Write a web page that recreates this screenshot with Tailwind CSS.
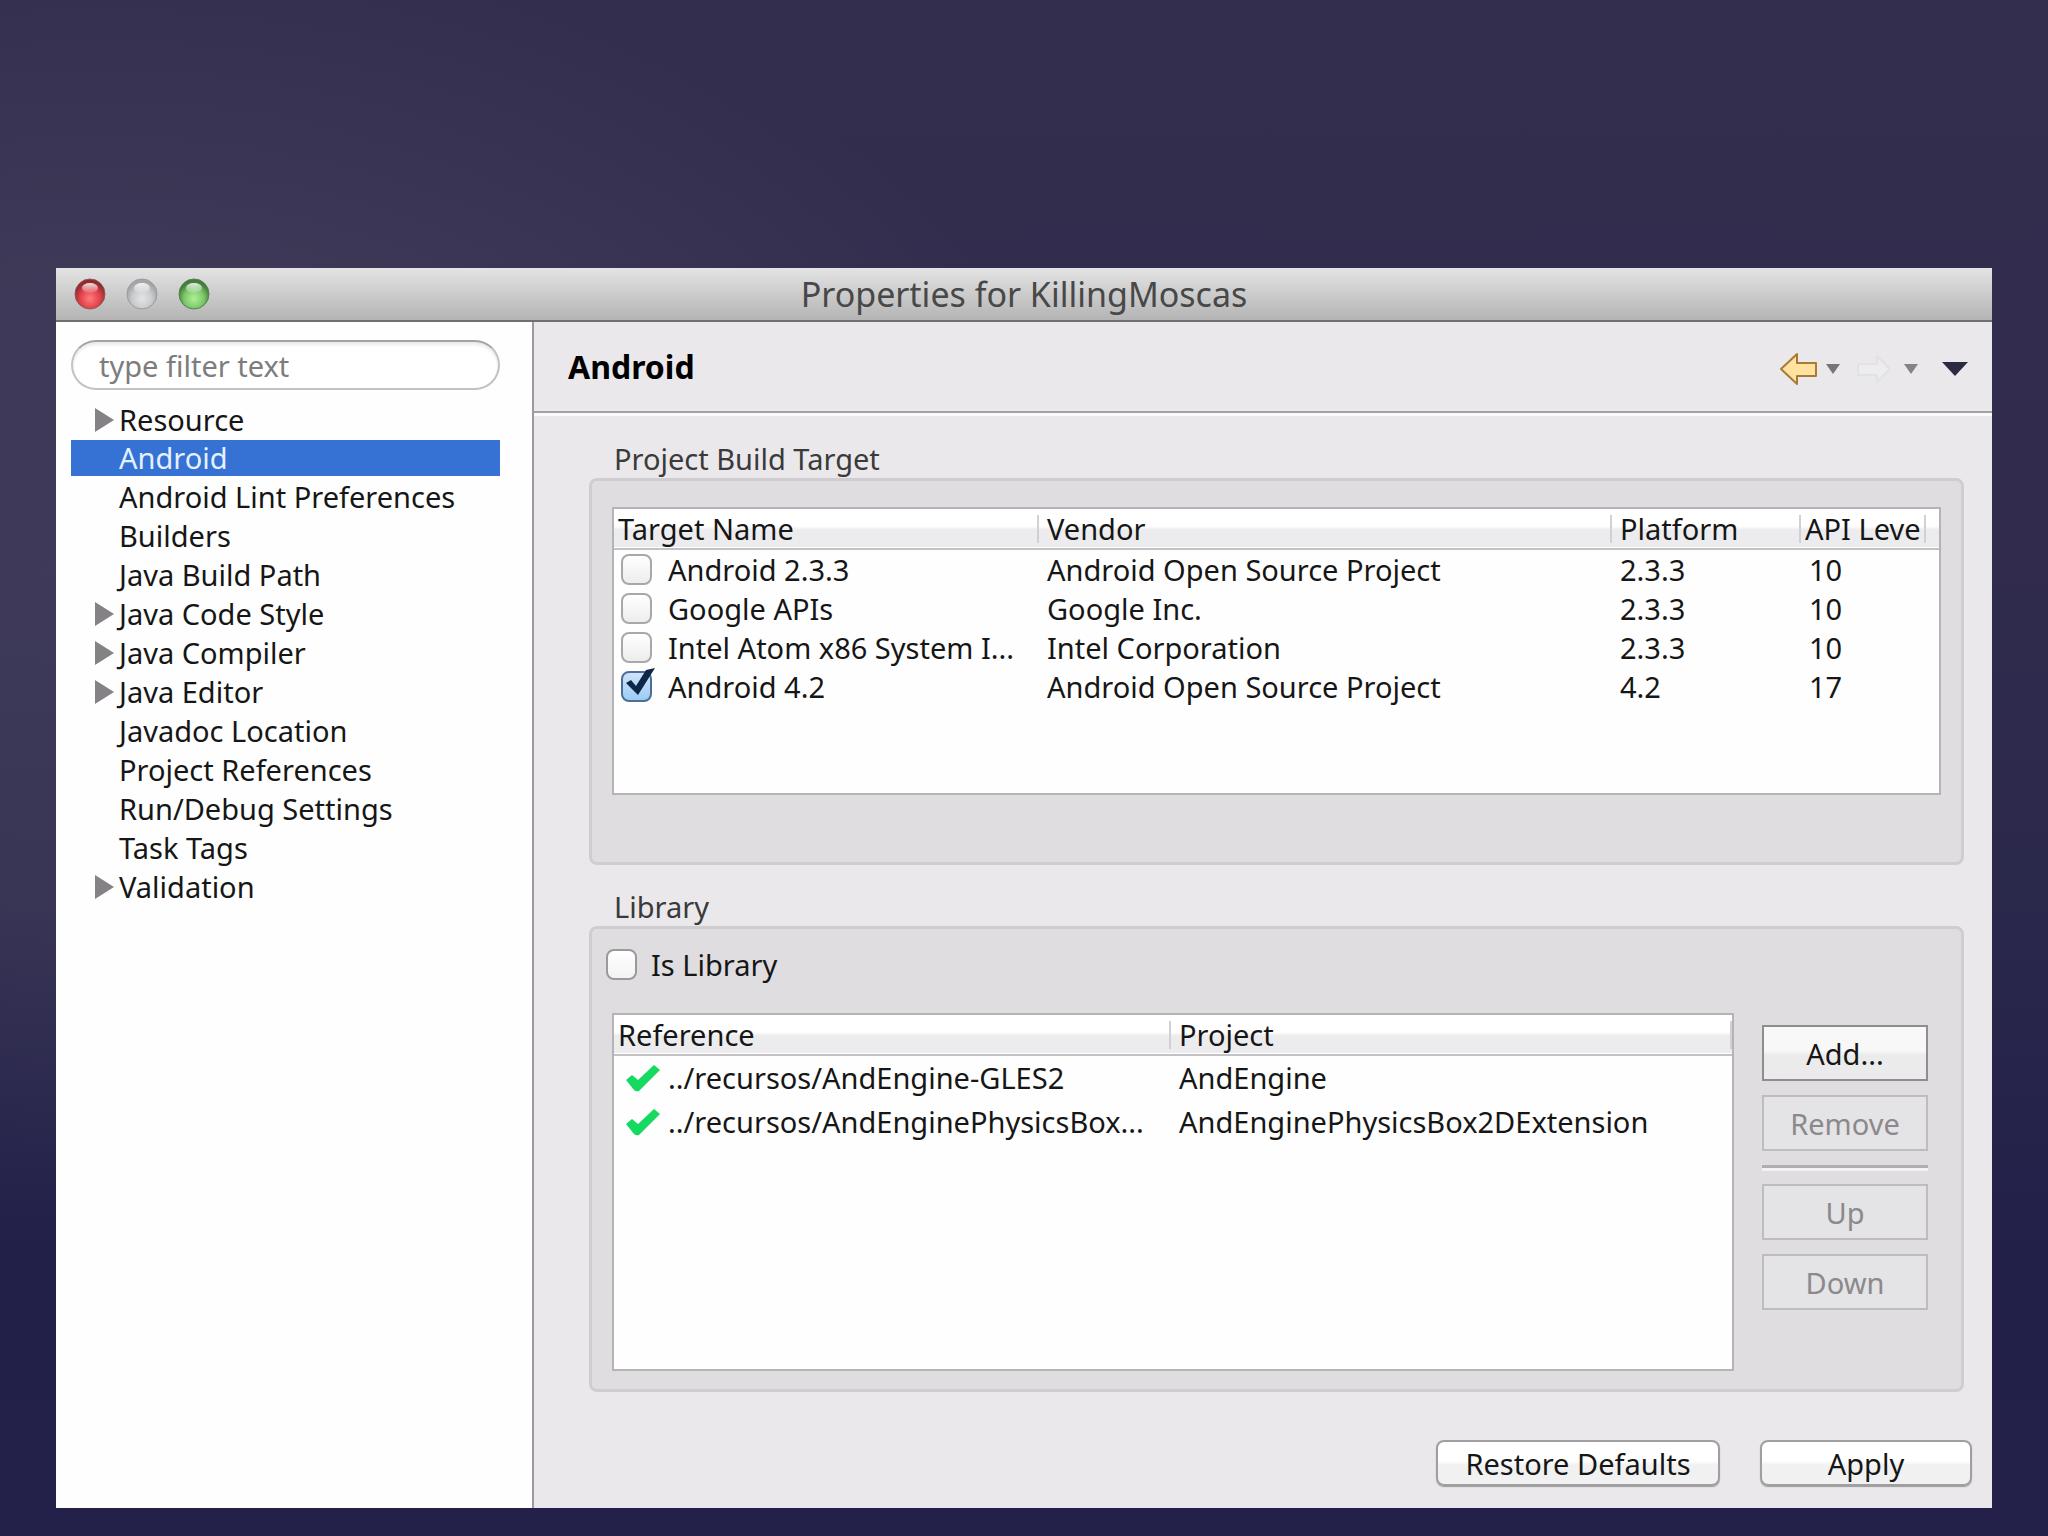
<!DOCTYPE html>
<html lang="en">
<head>
    <meta charset="UTF-8">
    <meta name="viewport" content="width=device-width, initial-scale=1.0">
    <title>Properties for KillingMoscas</title>
    <script src="https://cdn.jsdelivr.net/npm/@tailwindcss/browser@4"></script>
</head>
<body class="min-h-screen flex flex-col px-14 pt-[268px] pb-7 bg-[radial-gradient(ellipse_50%_42%_at_5%_38%,rgba(92,87,111,0.32),rgba(92,87,111,0.28)_50%,transparent),linear-gradient(to_bottom,#332e4d_0%,#312c4e_35%,#2a284b_58%,#222049_82%,#23214a_100%)] font-['Noto_Sans','Open_Sans',sans-serif] text-[29px] leading-[39px] text-[#161616]">
    <div class="flex-1 flex flex-col bg-[#eae8eb]">

        <!-- Title bar -->
        <header class="relative h-[54px] flex items-center justify-center bg-linear-to-b from-[#e4e4e4] to-[#b4b4b5] border-b-2 border-[#6f6f70]">
            <div class="absolute left-[18px] flex gap-5">
                <button aria-label="Close" class="size-8">
                    <svg viewBox="0 0 32 32">
                        <defs>
                            <radialGradient id="red" cx=".5" cy=".65" r=".55"><stop offset="0" stop-color="#ff7b7d"/><stop offset=".6" stop-color="#e2434a"/><stop offset="1" stop-color="#8e2a2e"/></radialGradient>
                            <linearGradient id="shine" x1="0" y1="0" x2="0" y2="1"><stop offset="0" stop-color="#fff" stop-opacity=".85"/><stop offset="1" stop-color="#fff" stop-opacity=".1"/></linearGradient>
                        </defs>
                        <circle cx="16" cy="16" r="15" fill="url(#red)" stroke="#93585a"/>
                        <ellipse cx="16" cy="10" rx="8" ry="5" fill="url(#shine)"/>
                    </svg>
                </button>
                <button aria-label="Minimize" class="size-8">
                    <svg viewBox="0 0 32 32">
                        <defs>
                            <radialGradient id="gray" cx=".5" cy=".65" r=".55"><stop offset="0" stop-color="#e3e5e7"/><stop offset=".6" stop-color="#c9cbce"/><stop offset="1" stop-color="#a2a4a7"/></radialGradient>
                        </defs>
                        <circle cx="16" cy="16" r="15" fill="url(#gray)" stroke="#9b9b9d"/>
                        <ellipse cx="16" cy="10" rx="8" ry="5" fill="url(#shine)"/>
                    </svg>
                </button>
                <button aria-label="Zoom" class="size-8">
                    <svg viewBox="0 0 32 32">
                        <defs>
                            <radialGradient id="green" cx=".5" cy=".65" r=".55"><stop offset="0" stop-color="#b0f096"/><stop offset=".6" stop-color="#7cc869"/><stop offset="1" stop-color="#3f7d38"/></radialGradient>
                        </defs>
                        <circle cx="16" cy="16" r="15" fill="url(#green)" stroke="#567f52"/>
                        <ellipse cx="16" cy="10" rx="8" ry="5" fill="url(#shine)"/>
                    </svg>
                </button>
            </div>
            <h1 class="text-[34px] text-[#484848]">Properties for KillingMoscas</h1>
        </header>

        <div class="flex-1 flex">
            <!-- Sidebar -->
            <nav class="w-[478px] shrink-0 bg-[#fefefe] border-r-2 border-[#9c9a9d] pl-[15px] pr-8 pt-[18px]">
                <input type="text" aria-label="Filter" placeholder="type filter text" class="block w-full h-[50px] mb-2.5 px-[26px] rounded-full border-2 border-[#c2c1c3] border-t-[#a3a2a4] bg-white placeholder:text-[#7d7d7d] shadow-[inset_0_3px_3px_#ececec]">
                <ul>
                    <li><a href="#" class="flex items-center pl-6"><svg class="w-6 h-6" viewBox="0 0 24 24"><path d="M0 0L19 12L0 24Z" fill="#848284"/></svg>Resource</a></li>
                    <li><a href="#" class="block pl-12 leading-9 my-px bg-[#3572d3] text-[#e4f1ff]">Android</a></li>
                    <li><a href="#" class="block pl-12">Android Lint Preferences</a></li>
                    <li><a href="#" class="block pl-12">Builders</a></li>
                    <li><a href="#" class="block pl-12">Java Build Path</a></li>
                    <li><a href="#" class="flex items-center pl-6"><svg class="w-6 h-6" viewBox="0 0 24 24"><path d="M0 0L19 12L0 24Z" fill="#848284"/></svg>Java Code Style</a></li>
                    <li><a href="#" class="flex items-center pl-6"><svg class="w-6 h-6" viewBox="0 0 24 24"><path d="M0 0L19 12L0 24Z" fill="#848284"/></svg>Java Compiler</a></li>
                    <li><a href="#" class="flex items-center pl-6"><svg class="w-6 h-6" viewBox="0 0 24 24"><path d="M0 0L19 12L0 24Z" fill="#848284"/></svg>Java Editor</a></li>
                    <li><a href="#" class="block pl-12">Javadoc Location</a></li>
                    <li><a href="#" class="block pl-12">Project References</a></li>
                    <li><a href="#" class="block pl-12">Run/Debug Settings</a></li>
                    <li><a href="#" class="block pl-12">Task Tags</a></li>
                    <li><a href="#" class="flex items-center pl-6"><svg class="w-6 h-6" viewBox="0 0 24 24"><path d="M0 0L19 12L0 24Z" fill="#848284"/></svg>Validation</a></li>
                </ul>
            </nav>

            <main class="flex-1 min-w-0 flex flex-col">
                <!-- Page header -->
                <div class="h-[91px] flex items-center justify-between pl-[34px] pr-6 border-b-2 border-[#a3a1a4] shadow-[0_3px_0_#fafafa]">
                    <h2 class="text-[32px] font-bold text-black">Android</h2>
                    <div class="flex items-center pt-1">
                        <button aria-label="Back" class="mr-2">
                            <svg class="w-10 h-9" viewBox="0 0 40 36"><path d="M3 18L19 3V12H38V25H19V33Z" fill="#ffe2a0" stroke="#a87b35" stroke-width="2" stroke-linejoin="round"/></svg>
                        </button>
                        <button aria-label="Back history" class="mr-4">
                            <svg class="w-3.5 h-3" viewBox="0 0 14 12"><path d="M0 1H14L7 11Z" fill="#777577"/></svg>
                        </button>
                        <button aria-label="Forward" class="mr-3" disabled>
                            <svg class="w-9 h-9" viewBox="0 0 36 36"><path d="M34 18L21 5V13H2V24H21V31Z" fill="#edecee" stroke="#e2e1e3" stroke-width="2" stroke-linejoin="round"/></svg>
                        </button>
                        <button aria-label="Forward history" class="mr-6">
                            <svg class="w-3.5 h-3" viewBox="0 0 14 12"><path d="M0 1H14L7 11Z" fill="#858386"/></svg>
                        </button>
                        <button aria-label="View menu">
                            <svg class="w-[26px] h-3.5" viewBox="0 0 26 14"><path d="M0 0H26L13 14Z" fill="#2c2a42"/></svg>
                        </button>
                    </div>
                </div>

                <div class="flex-1 flex flex-col pl-[55px] pr-7 pt-[26px] pb-[22px]">
                    <!-- Build target -->
                    <h3 class="pl-[25px] text-[#3a3a3a]">Project Build Target</h3>
                    <section class="px-5 pt-[26px] pb-[67px] rounded-lg border-3 border-[#cfcdd0] bg-[#dfdde0]">
                        <div class="h-[288px] border-2 border-[#b5b3b6] bg-[#fefefe]">
                            <table class="w-full table-fixed text-left whitespace-nowrap">
                                <thead>
                                    <tr class="h-10 bg-linear-to-b from-white from-45% to-[#ececee] to-55% border-b-2 border-[#c3c1c4]">
                                        <th class="w-[423px] pl-1 font-normal">Target Name</th>
                                        <th class="font-normal"><div class="h-7 pl-2 flex items-center border-l-2 border-[#d2d0d3]">Vendor</div></th>
                                        <th class="w-[189px] font-normal"><div class="h-7 pl-2 flex items-center border-l-2 border-[#d2d0d3]">Platform</div></th>
                                        <th class="w-[125px] font-normal"><div class="h-7 pl-1 flex items-center border-l-2 border-[#d2d0d3]">API Leve</div></th>
                                        <th class="w-[15px]"><div class="h-7 border-l-2 border-[#d2d0d3]"></div></th>
                                    </tr>
                                </thead>
                                <tbody>
                                    <tr>
                                        <td>
                                            <label class="flex items-center gap-4 pl-[7px]">
                                                <input type="checkbox" class="appearance-none size-[31px] rounded-lg border-2 border-[#a9a7aa] bg-linear-to-b from-white to-[#ededed]">
                                                Android 2.3.3
                                            </label>
                                        </td>
                                        <td class="pl-2.5">Android Open Source Project</td>
                                        <td class="pl-2.5">2.3.3</td>
                                        <td class="pl-2.5">10</td>
                                        <td></td>
                                    </tr>
                                    <tr>
                                        <td>
                                            <label class="flex items-center gap-4 pl-[7px]">
                                                <input type="checkbox" class="appearance-none size-[31px] rounded-lg border-2 border-[#a9a7aa] bg-linear-to-b from-white to-[#ededed]">
                                                Google APIs
                                            </label>
                                        </td>
                                        <td class="pl-2.5">Google Inc.</td>
                                        <td class="pl-2.5">2.3.3</td>
                                        <td class="pl-2.5">10</td>
                                        <td></td>
                                    </tr>
                                    <tr>
                                        <td>
                                            <label class="flex items-center gap-4 pl-[7px]">
                                                <input type="checkbox" class="appearance-none size-[31px] rounded-lg border-2 border-[#a9a7aa] bg-linear-to-b from-white to-[#ededed]">
                                                Intel Atom x86 System I...
                                            </label>
                                        </td>
                                        <td class="pl-2.5">Intel Corporation</td>
                                        <td class="pl-2.5">2.3.3</td>
                                        <td class="pl-2.5">10</td>
                                        <td></td>
                                    </tr>
                                    <tr>
                                        <td>
                                            <label class="relative flex items-center gap-4 pl-[7px]">
                                                <input type="checkbox" checked class="peer appearance-none size-[31px] rounded-lg border-2 border-[#4d6f96] bg-linear-to-b from-[#cfe3f8] to-[#9ccdf5]">
                                                <svg class="absolute left-[7px] top-0 w-9 h-9 hidden peer-checked:block" viewBox="0 0 36 36"><path d="M5 16L10 13L15 19L25 3L34 1L17 28Z" fill="#0e2748"/></svg>
                                                Android 4.2
                                            </label>
                                        </td>
                                        <td class="pl-2.5">Android Open Source Project</td>
                                        <td class="pl-2.5">4.2</td>
                                        <td class="pl-2.5">17</td>
                                        <td></td>
                                    </tr>
                                </tbody>
                            </table>
                        </div>
                    </section>

                    <!-- Library -->
                    <h3 class="pl-[25px] mt-[22px] text-[#3a3a3a]">Library</h3>
                    <section class="flex-1 flex flex-col pl-5 pr-[33px] pt-4 pb-[18px] rounded-lg border-3 border-[#cfcdd0] bg-[#dfdde0]">
                        <label class="flex items-center gap-3.5 -ml-1.5 self-start">
                            <input type="checkbox" class="appearance-none size-[31px] rounded-lg border-2 border-[#9b999c] bg-linear-to-b from-white to-[#f3f3f3]">
                            Is Library
                        </label>
                        <div class="flex-1 flex gap-7 mt-[29px]">
                            <div class="flex-1 border-2 border-[#b5b3b6] bg-[#fefefe]">
                                <table class="w-full table-fixed text-left whitespace-nowrap">
                                    <thead>
                                        <tr class="h-10 bg-linear-to-b from-white from-45% to-[#ececee] to-55% border-b-2 border-[#c3c1c4]">
                                            <th class="w-[555px] pl-1 font-normal">Reference</th>
                                            <th class="font-normal"><div class="h-7 pl-2 flex items-center border-x-2 border-[#d2d0d3]">Project</div></th>
                                        </tr>
                                    </thead>
                                    <tbody class="leading-[44px]">
                                        <tr>
                                            <td>
                                                <div class="flex items-center gap-2 pl-3">
                                                    <svg class="w-[34px] h-7" viewBox="0 0 34 28"><path d="M0 16L6 11L12 16L28 1L34 6L13 27Q10 28 8 26Z" fill="#16d95f"/></svg>
                                                    ../recursos/AndEngine-GLES2
                                                </div>
                                            </td>
                                            <td class="pl-2.5">AndEngine</td>
                                        </tr>
                                        <tr>
                                            <td>
                                                <div class="flex items-center gap-2 pl-3">
                                                    <svg class="w-[34px] h-7" viewBox="0 0 34 28"><path d="M0 16L6 11L12 16L28 1L34 6L13 27Q10 28 8 26Z" fill="#16d95f"/></svg>
                                                    ../recursos/AndEnginePhysicsBox...
                                                </div>
                                            </td>
                                            <td class="pl-2.5">AndEnginePhysicsBox2DExtension</td>
                                        </tr>
                                    </tbody>
                                </table>
                            </div>
                            <div class="w-[166px] shrink-0 flex flex-col gap-3.5 pt-3">
                                <button class="h-14 border-2 border-[#8f8d90] bg-linear-to-b from-[#f8f8f8] from-45% to-[#ebebec] to-55%">Add...</button>
                                <button disabled class="h-14 border-2 border-[#bebcbf] bg-[#e4e3e5] text-[#8b898c]">Remove</button>
                                <hr class="border-t-3 border-[#b0aeb1] shadow-[0_3px_0_#f2f2f2] mb-0.5">
                                <button disabled class="h-14 border-2 border-[#bebcbf] bg-[#e4e3e5] text-[#8b898c]">Up</button>
                                <button disabled class="h-14 border-2 border-[#bebcbf] bg-[#e4e3e5] text-[#8b898c]">Down</button>
                            </div>
                        </div>
                    </section>

                    <!-- Footer buttons -->
                    <div class="flex justify-end gap-10 mt-12 -mr-2">
                        <button class="w-[284px] h-[46px] rounded-lg border-2 border-[#a09ea1] bg-linear-to-b from-white from-45% to-[#f1f1f2] to-55% shadow-[0_1px_1px_#999] flex items-center justify-center">Restore Defaults</button>
                        <button class="w-[212px] h-[46px] rounded-lg border-2 border-[#a09ea1] bg-linear-to-b from-white from-45% to-[#f1f1f2] to-55% shadow-[0_1px_1px_#999] flex items-center justify-center">Apply</button>
                    </div>
                </div>
            </main>
        </div>
    </div>
</body>
</html>
